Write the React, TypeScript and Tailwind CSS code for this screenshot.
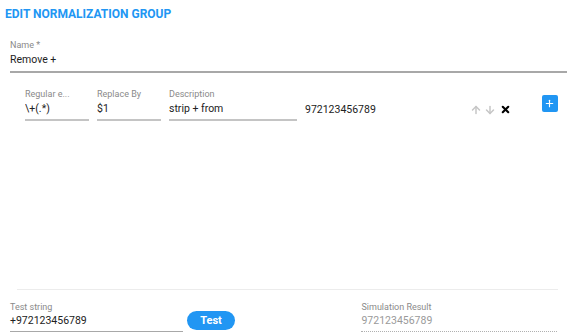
import { ArrowUp, ArrowDown, X, Plus } from "lucide-react";

function Field({
  label,
  value,
  className,
}: {
  label: string;
  value: string;
  className?: string;
}) {
  return (
    <div className={className}>
      <p className="truncate text-[9px] leading-[11px] text-[#8a8a8a]">{label}</p>
      <p className="mt-[2px] truncate pb-[3px] text-[10.5px] leading-[14px] text-[#222]">
        {value}
      </p>
      <div className="h-[2px] bg-[#c4c4c4]" />
    </div>
  );
}

export default function App() {
  return (
    <div className="flex h-[334px] w-[567px] flex-col overflow-hidden bg-white font-['Roboto',sans-serif]">
      <h1 className="pl-[5px] pt-[7px] text-[12px] font-bold uppercase leading-[14px] text-[#2196f3]">
        Edit Normalization Group
      </h1>

      <div className="mt-[19px] pl-[10px]">
        <p className="text-[9px] leading-[11px] text-[#8a8a8a]">Name *</p>
        <p className="mt-[2px] pb-[4px] text-[10.5px] leading-[14px] text-[#222]">Remove +</p>
        <div className="h-[1.5px] bg-[#a8a8a8]" />
      </div>

      <div className="mt-[16px] flex items-start pl-[25px]">
        <Field label="Regular e..." value="\+(.*)" className="w-[64px]" />
        <Field label="Replace By" value="$1" className="ml-[8px] w-[64px]" />
        <Field label="Description" value="strip + from" className="ml-[8px] w-[128px]" />
        <p className="ml-[8px] mt-[14px] text-[10.5px] leading-[14px] text-[#222]">972123456789</p>
        <div className="ml-[94px] mt-[15px] flex items-center gap-[2px]">
          <ArrowUp size={12} strokeWidth={3} className="text-[#c6c6c6]" />
          <ArrowDown size={12} strokeWidth={3} className="text-[#c6c6c6]" />
          <X size={11} strokeWidth={4.5} className="ml-[2px] text-black" />
        </div>
        <button className="ml-[31px] mt-[6px] flex h-[17px] w-[16px] items-center justify-center rounded-[2px] bg-[#2196f3]">
          <Plus size={11} strokeWidth={2.5} className="text-white" />
        </button>
      </div>

      <div className="flex-1" />

      <div className="ml-[17px] mr-[9px] h-px bg-[#ececec]" />

      <div className="flex items-start px-[10px] pt-[12px] pb-[2px]">
        <div className="w-[173px]">
          <p className="text-[9px] leading-[11px] text-[#8a8a8a]">Test string</p>
          <p className="mt-[1px] pb-[3px] text-[10.5px] leading-[14px] text-[#222]">+972123456789</p>
          <div className="h-[1.5px] bg-[#a8a8a8]" />
        </div>
        <button className="ml-[4px] mt-[9px] h-[19px] w-[49px] rounded-full bg-[#2196f3] text-[11px] font-bold leading-[19px] text-white">
          Test
        </button>
        <div className="ml-[126px] w-[196px]">
          <p className="text-[9px] leading-[11px] text-[#8a8a8a]">Simulation Result</p>
          <p className="mt-[1px] pb-[3px] text-[10.5px] leading-[14px] text-[#9a9a9a]">972123456789</p>
          <div className="border-b border-dotted border-[#b0b0b0]" />
        </div>
      </div>
    </div>
  );
}
